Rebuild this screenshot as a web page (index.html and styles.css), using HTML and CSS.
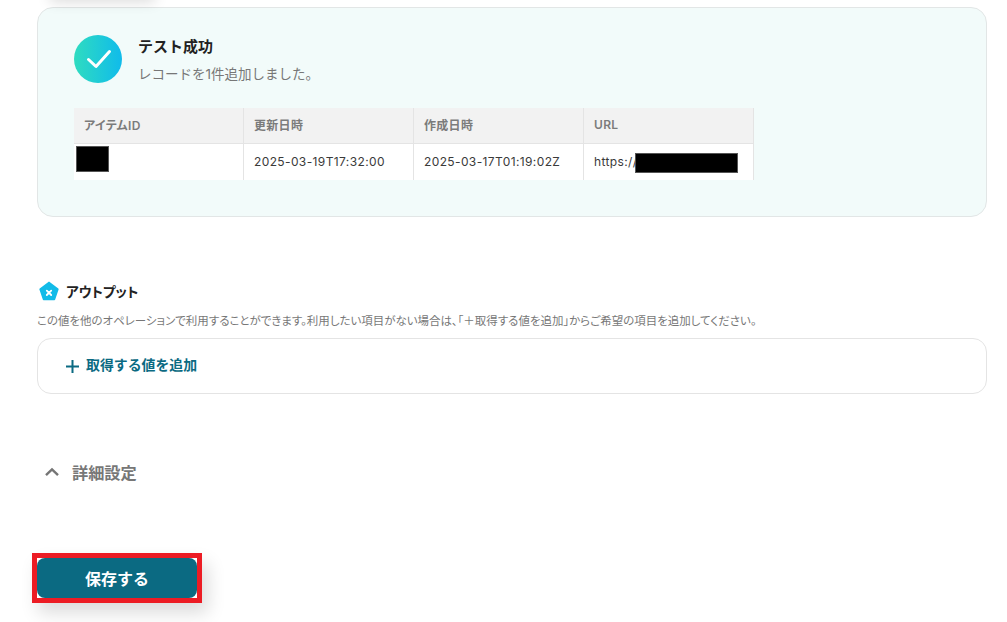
FILE: index.html
```html
<!DOCTYPE html>
<html lang="ja">
<head>
<meta charset="utf-8">
<title>テスト成功</title>
<link rel="stylesheet" href="styles.css">
</head>
<body>
<div class="top-shadow"></div>
<main class="page">
  <section class="result-card">
    <div class="result-head">
      <svg class="check-icon" width="48" height="48" viewBox="0 0 48 48">
        <defs>
          <linearGradient id="checkGrad" x1="0" y1="0" x2="1" y2="0">
            <stop offset="0" stop-color="#2fdcc0"/>
            <stop offset="1" stop-color="#10bbeb"/>
          </linearGradient>
        </defs>
        <circle cx="24" cy="24" r="24" fill="url(#checkGrad)"/>
        <path d="M14.5 24.5 L22 31.5 L35.5 16.5" fill="none" stroke="#fff" stroke-width="3" stroke-linecap="round" stroke-linejoin="round"/>
      </svg>
      <div class="result-text">
        <div class="result-title">テスト成功</div>
        <div class="result-sub">レコードを1件追加しました。</div>
      </div>
    </div>
    <table class="result-table">
      <thead>
        <tr><th>アイテムID</th><th>更新日時</th><th>作成日時</th><th>URL</th></tr>
      </thead>
      <tbody>
        <tr>
          <td class="cell-redact"><span class="redact redact-id"></span></td>
          <td>2025-03-19T17:32:00</td>
          <td>2025-03-17T01:19:02Z</td>
          <td class="cell-redact">https://<span class="redact redact-url"></span></td>
        </tr>
      </tbody>
    </table>
  </section>

  <section class="output">
    <div class="output-head">
      <svg class="output-icon" width="20" height="20" viewBox="0 0 20 20">
        <path d="M10 .6 L19.3 7.4 Q19.8 7.8 19.6 8.4 L16.2 18.6 Q16 19.2 15.4 19.2 L4.6 19.2 Q4 19.2 3.8 18.6 L.4 8.4 Q.2 7.8 .7 7.4 Z" fill="#12bbe8"/>
        <path d="M7.8 9.6 L12.2 14 M12.2 9.6 L7.8 14" stroke="#fff" stroke-width="1.8" stroke-linecap="round"/>
      </svg>
      <span class="output-title">アウトプット</span>
    </div>
    <p class="output-desc">この値を他のオペレーションで利用することができます。利用したい項目がない場合は、「＋取得する値を追加」からご希望の項目を追加してください。</p>
    <div class="add-box">
      <svg class="plus-icon" width="13" height="13" viewBox="0 0 13 13">
        <path d="M6.5 0 V13 M0 6.5 H13" stroke="#0b6a82" stroke-width="2"/>
      </svg>
      <span class="add-label">取得する値を追加</span>
    </div>
  </section>

  <section class="details">
    <svg class="chevron" width="16" height="10" viewBox="0 0 16 10">
      <path d="M2 8.2 L8 2.4 L14 8.2" fill="none" stroke="#757575" stroke-width="2.4"/>
    </svg>
    <span class="details-label">詳細設定</span>
  </section>

  <div class="save-frame">
    <button class="save-btn" type="button">保存する</button>
  </div>
</main>
</body>
</html>
```
FILE: styles.css
```css
* { box-sizing: border-box; }
html, body { margin: 0; padding: 0; background: #fff; height: 622px; overflow: hidden; }
body {
  font-family: Inter, "Noto Sans CJK JP", "Noto Sans", sans-serif;
  position: relative;
}
.top-shadow {
  position: absolute;
  left: 50px;
  top: -30px;
  width: 105px;
  height: 30px;
  box-shadow: 0 2px 14px rgba(0, 0, 0, .14);
}
.page { padding: 7px 20px 0 37px; }

.result-card {
  height: 210px;
  padding: 27px 36px 0;
  background: #f2fbfa;
  border: 1px solid #e2e6e6;
  border-radius: 16px;
}
.result-head { display: flex; gap: 16px; align-items: flex-start; height: 48px; }
.check-icon { display: block; flex: none; }
.result-text { padding-top: 1px; }
.result-title { font-size: 15px; line-height: 22px; font-weight: 700; color: #222; }
.result-sub { margin-top: 6px; font-size: 13.5px; line-height: 20px; color: #777; }

.result-table {
  margin-top: 25px;
  border-collapse: separate;
  border-spacing: 0;
  table-layout: fixed;
  width: 680px;
  font-size: 12px;
}
.result-table th, .result-table td {
  width: 170px;
  height: 36px;
  padding: 0 10px 2px;
  text-align: left;
  white-space: nowrap;
  border-right: 1px solid #e4e4e4;
}
.result-table th {
  background: #f2f2f2;
  color: #7b7b7b;
  font-weight: 600;
  border-bottom: 1px solid #e4e4e4;
  font-feature-settings: "palt";
  letter-spacing: .3px;
}
.result-table td { background: #fff; color: #3a3a3a; letter-spacing: .38px; }
.cell-redact { position: relative; }
.redact { position: absolute; background: #000; border: 1px solid #555; display: block; }
.redact-id { left: 2px; top: 2px; width: 33px; height: 26px; }
.redact-url { left: 51px; top: 9px; width: 103px; height: 20px; }

.output { margin-top: 62px; }
.output-head { display: flex; align-items: center; gap: 7px; height: 24px; margin-left: 2px; }
.output-icon { display: block; flex: none; }
.output-title { font-size: 13.6px; font-weight: 700; color: #222; font-feature-settings: "palt"; }
.output-desc {
  margin: 10px 0 0;
  font-size: 11.48px;
  line-height: 16px;
  color: #777;
  white-space: nowrap;
  font-feature-settings: "palt";
}
.add-box {
  margin-top: 9px;
  height: 56px;
  display: flex;
  align-items: center;
  gap: 7px;
  padding-left: 28px;
  border: 1px solid #e4e4e4;
  border-radius: 14px;
}
.plus-icon { display: block; flex: none; }
.add-label { font-size: 13.9px; line-height: 20px; padding-bottom: 2px; font-weight: 700; color: #0b6a82; }

.details { margin-top: 66px; display: flex; align-items: center; gap: 12px; height: 24px; padding-left: 7px; }
.chevron { display: block; flex: none; }
.details-label { font-size: 16.2px; font-weight: 600; color: #777; }

.save-frame {
  margin: 69px 0 0 -5px;
  width: 170px;
  height: 50px;
  border: 5px solid #ec1c24;
  background: #fff;
  box-shadow: 6px 10px 18px rgba(0, 0, 0, .14);
}
.save-btn {
  display: block;
  width: 160px;
  height: 40px;
  background: #0b6a82;
  color: #fff;
  font: 700 16px Inter, "Noto Sans CJK JP", sans-serif;
  border: 0;
  border-radius: 8px;
}
```
